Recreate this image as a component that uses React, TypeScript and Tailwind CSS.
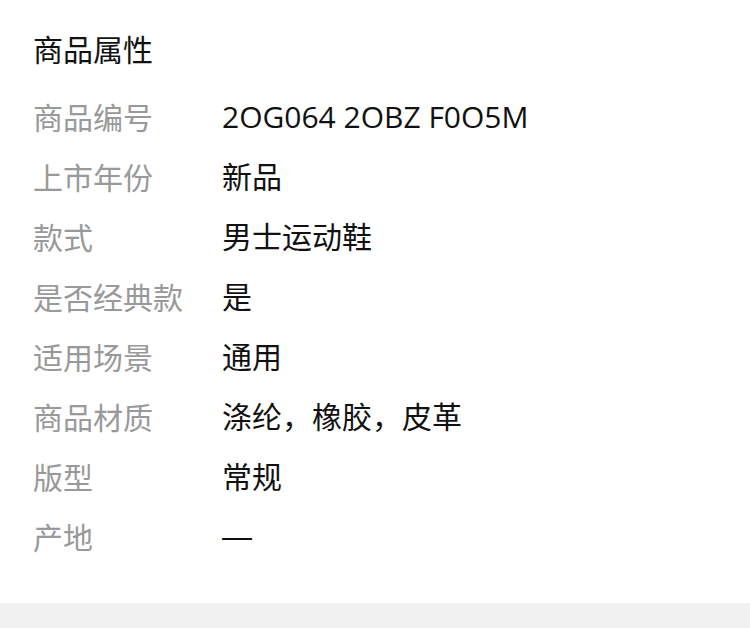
import React from 'react';

const rows: { label: string; value: string }[] = [
  { label: '商品编号', value: '2OG064 2OBZ F0O5M' },
  { label: '上市年份', value: '新品' },
  { label: '款式', value: '男士运动鞋' },
  { label: '是否经典款', value: '是' },
  { label: '适用场景', value: '通用' },
  { label: '商品材质', value: '涤纶，橡胶，皮革' },
  { label: '版型', value: '常规' },
  { label: '产地', value: '—' },
];

const App: React.FC = () => {
  return (
    <div
      className="w-[750px] h-[628px] bg-white flex flex-col overflow-hidden"
      style={{ fontFamily: '"Noto Sans CJK SC", "Noto Sans", sans-serif' }}
    >
      <div className="flex-1 pl-[33px] pt-[18px]">
        <div className="h-[60px] flex items-center text-[30px] text-[#111]">商品属性</div>
        <div className="mt-2 flex flex-col">
          {rows.map((row) => (
            <div key={row.label} className="h-[60px] flex items-center text-[30px]">
              <span className="w-[189px] shrink-0 text-[#999]">{row.label}</span>
              <span
                className="text-[#111]"
                style={{
                  fontFamily:
                    row.value === '—'
                      ? '"Liberation Sans", sans-serif'
                      : '"Open Sans", "Noto Sans CJK SC", sans-serif',
                }}
              >
                {row.value}
              </span>
            </div>
          ))}
        </div>
      </div>
      <div className="h-[25px] bg-[#f1f1f1]" />
    </div>
  );
};

export default App;
